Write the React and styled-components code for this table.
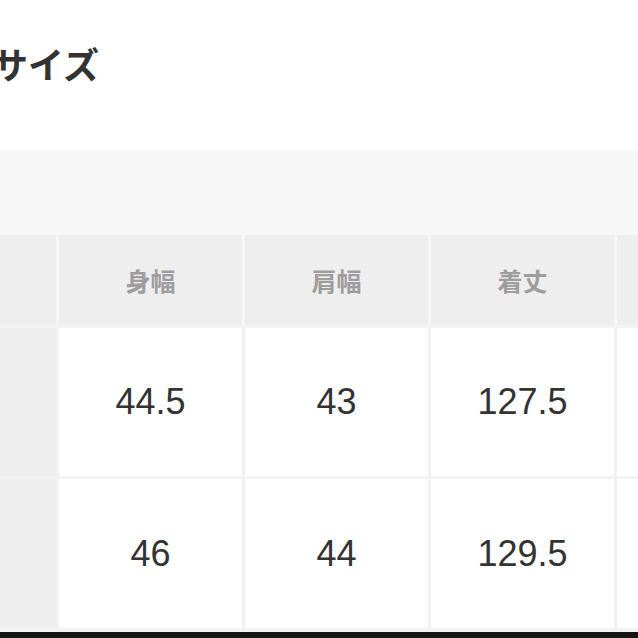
import React from "react";
import styled, { createGlobalStyle } from "styled-components";

const Global = createGlobalStyle`
  html, body { margin: 0; padding: 0; background: #fff; }
  body { width: 638px; height: 638px; overflow: hidden; }
`;

const Page = styled.div`
  width: 638px;
  height: 638px;
  overflow: hidden;
  display: flex;
  flex-direction: column;
  background: #fff;
`;

const TitleArea = styled.div`
  height: 150px;
  box-sizing: border-box;
  padding-top: 43px;
`;

const Title = styled.h2`
  margin: 0 0 0 -8px;
  font-family: "Noto Sans CJK JP", sans-serif;
  font-size: 36px;
  line-height: 40px;
  font-weight: 700;
  color: #333;
  letter-spacing: 0;
`;

const Band = styled.div`
  height: 85px;
  background: #f7f7f7;
`;

const Table = styled.div`
  display: flex;
  flex-direction: column;
  gap: 3px;
  background: #f3f3f3;
  padding-bottom: 4px;
`;

const Row = styled.div`
  display: grid;
  grid-template-columns: 56px 183px 183px 183px 183px;
  column-gap: 3px;
  height: ${(p) => p.$h}px;
  background: ${(p) => (p.$head ? "#f6f6f6" : "#f1f1f1")};
`;

const Cell = styled.div`
  display: flex;
  align-items: center;
  justify-content: center;
  background: ${(p) => (p.$head || p.$side ? "#eeeeee" : "#ffffff")};
`;

const HeadText = styled.span`
  font-family: "Noto Sans CJK JP", sans-serif;
  font-size: 25px;
  font-weight: 700;
  color: #9d9d9d;
  line-height: 1;
`;

const Num = styled.span`
  font-family: "Liberation Sans", Arial, sans-serif;
  font-size: 36px;
  color: #333;
  line-height: 1;
`;

const BottomBar = styled.div`
  flex: 1;
  background: #141414;
`;

const heads = ["身幅", "肩幅", "着丈", ""];
const rows = [
  { h: 148, vals: ["44.5", "43", "127.5", ""] },
  { h: 149, vals: ["46", "44", "129.5", ""] },
];

export default function App() {
  return (
    <Page>
      <Global />
      <TitleArea>
        <Title>サイズ</Title>
      </TitleArea>
      <Band />
      <Table>
        <Row $head $h={90}>
          <Cell $head />
          {heads.map((t, i) => (
            <Cell $head key={i}>
              <HeadText>{t}</HeadText>
            </Cell>
          ))}
        </Row>
        {rows.map((r, ri) => (
          <Row $h={r.h} key={ri}>
            <Cell $side />
            {r.vals.map((v, i) => (
              <Cell key={i}>
                <Num>{v}</Num>
              </Cell>
            ))}
          </Row>
        ))}
      </Table>
      <BottomBar />
    </Page>
  );
}
